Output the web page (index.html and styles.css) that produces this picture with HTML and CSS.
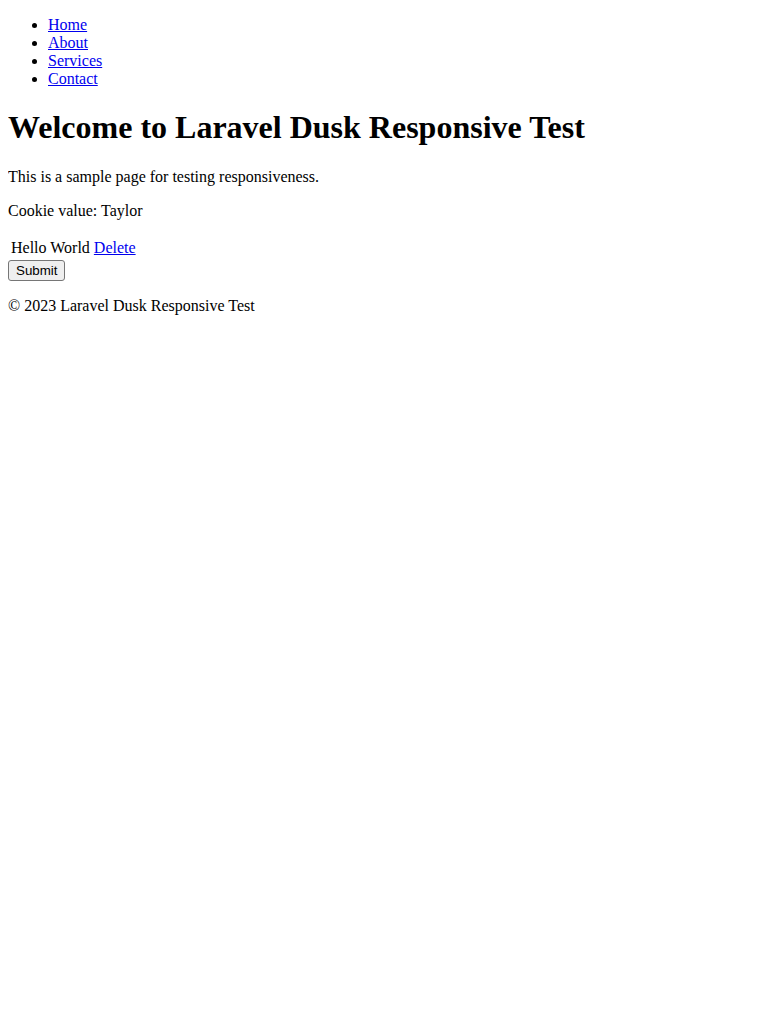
FILE: index.html
```html
<!DOCTYPE html>
<html lang="en">
<head>
<meta charset="utf-8">
<title>Laravel Dusk Responsive Test</title>
<link rel="stylesheet" href="styles.css">
</head>
<body class="page">
<nav class="nav">
  <ul class="nav-list">
    <li><a class="link" href="#">Home</a></li>
    <li><a class="link" href="#">About</a></li>
    <li><a class="link" href="#">Services</a></li>
    <li><a class="link" href="#">Contact</a></li>
  </ul>
</nav>
<main class="main">
  <h1 class="title">Welcome to Laravel Dusk Responsive Test</h1>
  <p class="text">This is a sample page for testing responsiveness.</p>
  <p class="text">Cookie value: Taylor</p>
  <form class="form">
    <table class="table">
      <tr><td class="cell">Hello World <a class="link" href="#">Delete</a></td></tr>
    </table>
    <button class="btn" type="button">Submit</button>
  </form>
</main>
<footer class="footer">
  <p class="text">© 2023 Laravel Dusk Responsive Test</p>
</footer>
</body>
</html>
```

FILE: styles.css
```css
html {
  margin: 0;
  padding: 0;
}
.page {
  margin: 0 8px 8px;
  font-family: "Liberation Serif", "Times New Roman", serif;
  font-size: 16px;
  line-height: normal;
  color: #000;
  background: #fff;
}
.nav-list {
  margin: 16px 0;
  padding-left: 40px;
  list-style: disc;
}
.link {
  color: #0000ee;
  text-decoration: underline;
}
.title {
  font-size: 32px;
  font-weight: bold;
  margin: 21.44px 0;
}
.text {
  margin: 16px 0;
}
.form {
  margin: 0;
}
.table {
  border-spacing: 2px;
  border-collapse: separate;
}
.cell {
  padding: 1px;
}
.btn {
  display: inline-block;
  font-family: "Liberation Sans", Arial, sans-serif;
  font-size: 13.3333px;
  line-height: 15px;
  padding: 2px 7px;
  border: 1px solid #767676;
  border-radius: 3px;
  background: #efefef;
  color: #000;
}
```
